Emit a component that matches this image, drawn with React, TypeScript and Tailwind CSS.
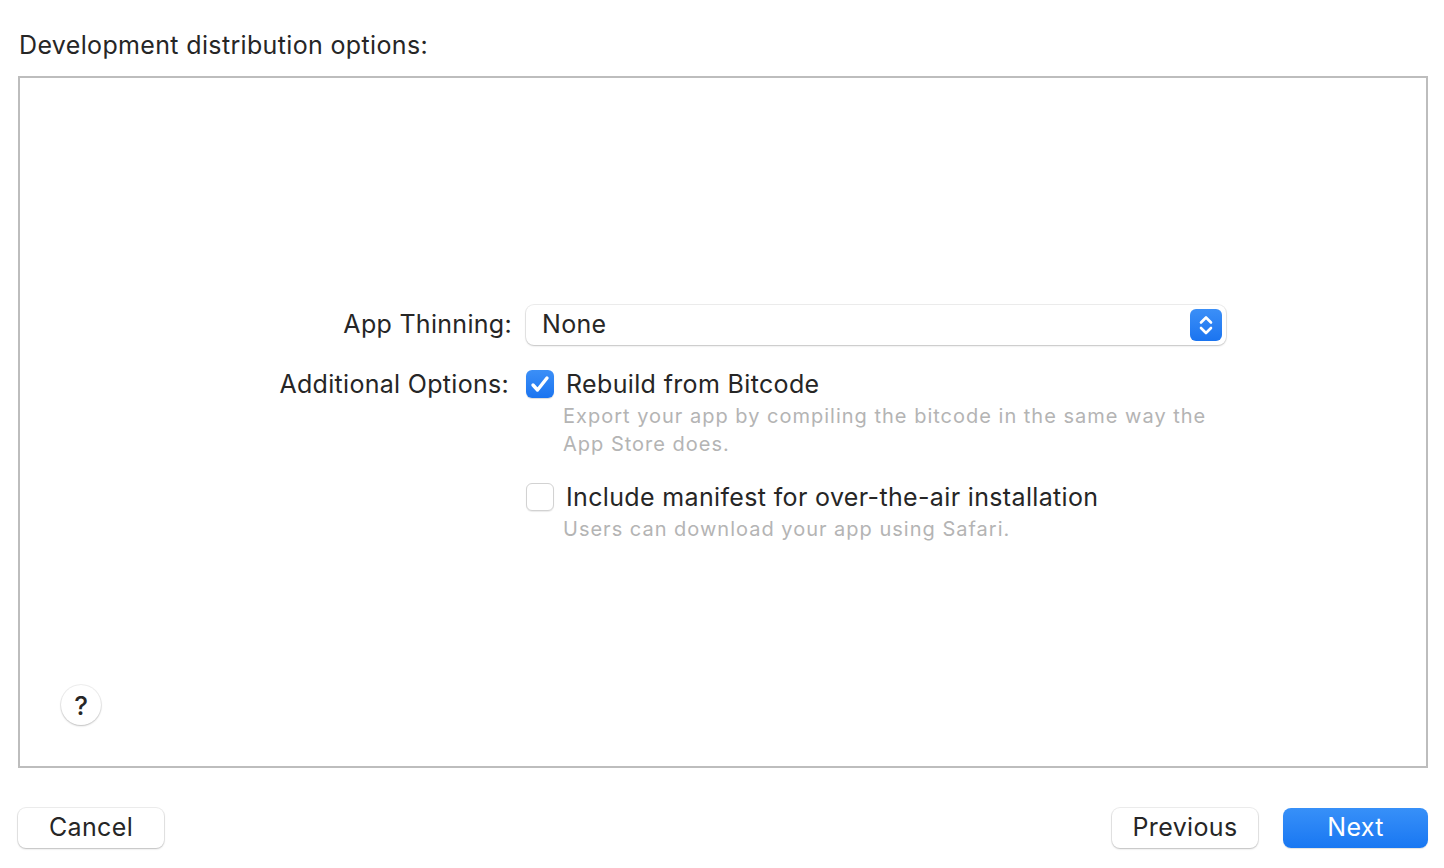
import { useState } from "react";

const font = { fontFamily: "Inter, 'Noto Sans', sans-serif" };

function Checkbox({ checked, onToggle }: { checked: boolean; onToggle: () => void }) {
  return (
    <button
      onClick={onToggle}
      className={
        checked
          ? "flex h-[28px] w-[28px] shrink-0 items-center justify-center rounded-[6px] bg-gradient-to-b from-[#3b8ff7] to-[#1a74f0] shadow-[0_1px_1px_rgba(0,0,0,0.15)]"
          : "flex h-[28px] w-[28px] shrink-0 items-center justify-center rounded-[6px] border border-[#d2d2d2] bg-white shadow-[0_1px_1px_rgba(0,0,0,0.08)]"
      }
    >
      {checked && (
        <svg width="28" height="28" viewBox="0 0 28 28" fill="none">
          <path d="M7 15l4.5 5L21 8" stroke="white" strokeWidth="3.4" strokeLinecap="round" strokeLinejoin="round" />
        </svg>
      )}
    </button>
  );
}

function OptionRow({
  title,
  description,
  checked,
  onToggle,
}: {
  title: string;
  description: string[];
  checked: boolean;
  onToggle: () => void;
}) {
  return (
    <div className="flex flex-col">
      <div className="flex items-center gap-[12px]">
        <Checkbox checked={checked} onToggle={onToggle} />
        <span className="text-[25px] leading-[30px] tracking-[0.35px] text-[#262626]">{title}</span>
      </div>
      <div className="pl-[37px] pt-[3px] text-[20px] leading-[28px] tracking-[1px] text-[#b4b4b4]">
        {description.map((line) => (
          <div key={line}>{line}</div>
        ))}
      </div>
    </div>
  );
}

export default function App() {
  const [bitcode, setBitcode] = useState(true);
  const [manifest, setManifest] = useState(false);

  const buttonText = "text-[25px] tracking-[0.35px]";

  return (
    <div className="flex h-[868px] w-[1444px] flex-col bg-white" style={font}>
      {/* Header */}
      <div className="px-[19px] pt-[28px] text-[25px] leading-[34px] tracking-[0.35px] text-[#262626]">
        Development distribution options:
      </div>

      {/* Options panel */}
      <div className="relative ml-[18px] mr-[16px] mt-[14px] h-[692px] border-2 border-[#bdbdbd]">
        <div className="flex flex-col pt-[227px]">
          <div className="flex items-center">
            <div className="w-[506px] pr-[14px] text-right text-[25px] tracking-[0.3px] text-[#262626]">App Thinning:</div>
            <div className="flex h-[40px] w-[700px] items-center justify-between rounded-[8px] bg-white pl-[16px] pr-[4px] shadow-[0_0_0_1px_rgba(0,0,0,0.07),0_1px_2px_rgba(0,0,0,0.18)]">
              <span className="text-[25px] tracking-[0.3px] text-[#262626]">None</span>
              <div className="flex h-[32px] w-[32px] items-center justify-center rounded-[6px] bg-gradient-to-b from-[#3b8ff7] to-[#1a74f0]">
                <svg width="32" height="32" viewBox="0 0 32 32" fill="none">
                  <path d="M11 13.5L16 8.5 21 13.5M11 19L16 24 21 19" stroke="white" strokeWidth="2.6" strokeLinecap="round" strokeLinejoin="round" />
                </svg>
              </div>
            </div>
          </div>

          <div className="mt-[24px] flex">
            <div className="w-[506px] pr-[17px] text-right text-[25px] leading-[30px] tracking-[0.3px] text-[#262626]">
              Additional Options:
            </div>
            <div className="flex flex-col gap-[24px]">
              <OptionRow
                title="Rebuild from Bitcode"
                description={["Export your app by compiling the bitcode in the same way the", "App Store does."]}
                checked={bitcode}
                onToggle={() => setBitcode(!bitcode)}
              />
              <OptionRow
                title="Include manifest for over-the-air installation"
                description={["Users can download your app using Safari."]}
                checked={manifest}
                onToggle={() => setManifest(!manifest)}
              />
            </div>
          </div>
        </div>

        {/* Help button */}
        <button className="absolute left-[41px] top-[607px] flex h-[40px] w-[40px] items-center justify-center rounded-full bg-white text-[26px] font-medium text-[#262626] shadow-[0_0_0_1px_rgba(0,0,0,0.06),0_1px_2px_rgba(0,0,0,0.2)]">
          ?
        </button>
      </div>

      {/* Footer */}
      <div className="ml-[18px] mr-[16px] mt-[40px] flex items-center justify-between">
        <button className={`h-[40px] w-[146px] rounded-[8px] bg-white text-[#262626] shadow-[0_0_0_1px_rgba(0,0,0,0.07),0_1px_2px_rgba(0,0,0,0.2)] ${buttonText}`}>
          Cancel
        </button>
        <div className="flex gap-[25px]">
          <button className={`h-[40px] w-[146px] rounded-[8px] bg-white text-[#262626] shadow-[0_0_0_1px_rgba(0,0,0,0.07),0_1px_2px_rgba(0,0,0,0.2)] ${buttonText}`}>
            Previous
          </button>
          <button className={`h-[40px] w-[145px] rounded-[8px] bg-gradient-to-b from-[#3790f8] to-[#1877f2] text-white shadow-[0_1px_1px_rgba(0,0,0,0.12)] ${buttonText}`}>
            Next
          </button>
        </div>
      </div>
    </div>
  );
}
